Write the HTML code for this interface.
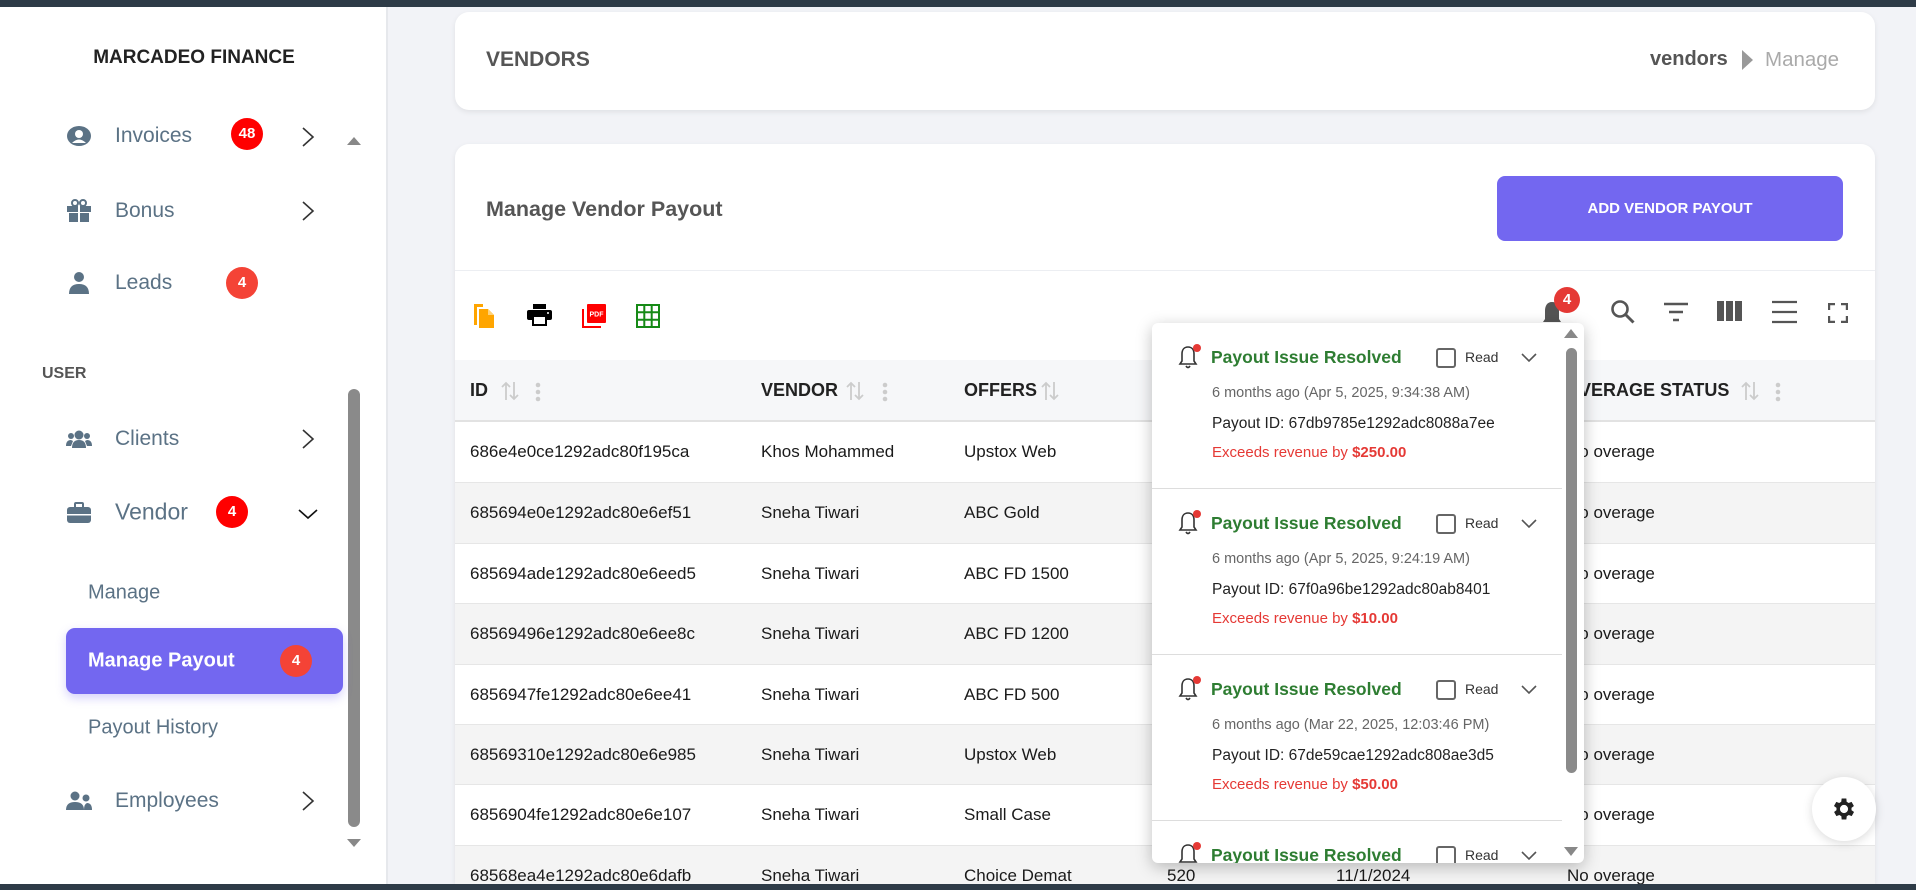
<!DOCTYPE html>
<html><head><meta charset="utf-8"><style>
*{box-sizing:border-box;margin:0;padding:0}
html,body{width:1916px;height:890px;overflow:hidden}
body{background:#f2f3f7;font-family:"Liberation Sans",sans-serif;position:relative}
.abs{position:absolute}
.topbar{left:0;top:0;width:1916px;height:7px;background:#2e3b47}
.botbar{left:0;top:884px;width:1916px;height:6px;background:#2e3b47}
.side{left:0;top:7px;width:388px;height:877px;background:#fff;border-right:2px solid #e6e8ec}
.mi{position:absolute;font-size:21px;color:#5b7285;font-weight:500;transform:translateY(-50%)}
.ico{position:absolute;transform:translate(-50%,-50%)}
.chev{position:absolute;transform:translate(-50%,-50%)}
.badge{position:absolute;transform:translate(-50%,-50%);height:32px;min-width:32px;border-radius:16px;background:#f44336;color:#fff;font-weight:bold;font-size:15px;text-align:center;line-height:32px;padding:0 6px}
.card{background:#fff;border-radius:14px;box-shadow:0 2px 6px rgba(0,0,0,.08)}
.th{position:absolute;font-weight:bold;font-size:18px;color:#222;top:380px}
.row{position:absolute;left:455px;width:1420px;height:60.4px}
.cell{position:absolute;font-size:17px;color:#1a1a1a;transform:translateY(-50%);top:30px}
.pop{left:1152px;top:323px;width:432px;height:540px;background:#fff;border-radius:6px;box-shadow:0 4px 16px rgba(0,0,0,.25);overflow:hidden}
.item{position:absolute;left:0;width:410px;height:166px;border-bottom:1px solid #ddd}
.t{position:absolute;left:59px;top:24px;font-size:17.5px;font-weight:bold;color:#2e7d32}
.ts{position:absolute;left:60px;top:62px;font-size:14.5px;color:#666}
.pid{position:absolute;left:60px;top:92px;font-size:15.5px;color:#222}
.ex{position:absolute;left:60px;top:121px;font-size:15px;color:#e53935}
.cb{position:absolute;left:284px;top:25px;width:20px;height:20px;border:2px solid #666;border-radius:3px}
.rd{position:absolute;left:313px;top:26px;font-size:14px;color:#333}
</style></head><body>
<div class="abs topbar"></div>
<div class="abs side">
 <div class="abs" style="left:0;width:388px;top:40px;text-align:center;font-weight:bold;font-size:19px;color:#222">MARCADEO FINANCE</div>
 <div class="abs" style="left:347px;top:130px;width:0;height:0;border-left:7px solid transparent;border-right:7px solid transparent;border-bottom:8px solid #888"></div>
 <div class="abs" style="left:348px;top:382px;width:12px;height:438px;background:#8a8a8a;border-radius:6px"></div>
 <div class="abs" style="left:347px;top:832px;width:0;height:0;border-left:7px solid transparent;border-right:7px solid transparent;border-top:8px solid #888"></div>
</div>
<svg class="ico" style="left:79px;top:136px" width="26" height="22" viewBox="0 0 26 22"><ellipse cx="13" cy="11" rx="12" ry="10" fill="#5b7285"/><circle cx="13" cy="9" r="4" fill="#fff"/><path d="M6 18q7-7 14 0" fill="#fff"/></svg>
<div class="mi" style="left:115px;top:136px">Invoices</div>
<div class="badge" style="left:247px;top:134px;background:#f00">48</div>
<svg class="chev" style="left:308px;top:137px" width="14" height="22"><path d="M2 2l10 9-10 9" stroke="#333" stroke-width="1.6" fill="none"/></svg>

<svg class="ico" style="left:79px;top:211px" width="26" height="24" viewBox="0 0 26 24"><rect x="1" y="7" width="24" height="6" fill="#5b7285"/><rect x="3" y="14" width="20" height="9" fill="#5b7285"/><rect x="12" y="7" width="2" height="16" fill="#fff"/><circle cx="9" cy="4" r="3" fill="none" stroke="#5b7285" stroke-width="2"/><circle cx="17" cy="4" r="3" fill="none" stroke="#5b7285" stroke-width="2"/></svg>
<div class="mi" style="left:115px;top:211px">Bonus</div>
<svg class="chev" style="left:308px;top:211px" width="14" height="22"><path d="M2 2l10 9-10 9" stroke="#333" stroke-width="1.6" fill="none"/></svg>

<svg class="ico" style="left:79px;top:283px" width="22" height="24" viewBox="0 0 22 24"><circle cx="11" cy="6" r="5" fill="#5b7285"/><path d="M1 23q0-10 10-10q10 0 10 10z" fill="#5b7285"/></svg>
<div class="mi" style="left:115px;top:283px">Leads</div>
<div class="badge" style="left:242px;top:283px">4</div>

<div class="abs" style="left:42px;top:365px;font-weight:bold;font-size:16px;color:#555">USER</div>

<svg class="ico" style="left:79px;top:439px" width="26" height="20" viewBox="0 0 26 20"><circle cx="13" cy="6" r="4.5" fill="#5b7285"/><circle cx="5" cy="7" r="3" fill="#5b7285"/><circle cx="21" cy="7" r="3" fill="#5b7285"/><path d="M6 19q0-8 7-8q7 0 7 8z" fill="#5b7285"/><path d="M0 17q0-6 5-6l2 1-2 5z M26 17q0-6-5-6l-2 1 2 5z" fill="#5b7285"/></svg>
<div class="mi" style="left:115px;top:439px">Clients</div>
<svg class="chev" style="left:308px;top:439px" width="14" height="22"><path d="M2 2l10 9-10 9" stroke="#333" stroke-width="1.6" fill="none"/></svg>

<svg class="ico" style="left:79px;top:513px" width="26" height="22" viewBox="0 0 26 22"><rect x="1" y="5" width="24" height="16" rx="3" fill="#5b7285"/><rect x="9" y="1" width="8" height="5" rx="1" fill="none" stroke="#5b7285" stroke-width="2"/><rect x="1" y="12" width="24" height="1.5" fill="#fff"/></svg>
<div class="mi" style="left:115px;top:512px;font-size:23px">Vendor</div>
<div class="badge" style="left:232px;top:512px;background:#f00">4</div>
<svg class="chev" style="left:308px;top:514px" width="22" height="12"><path d="M2 2l9 8 9-8" stroke="#111" stroke-width="1.6" fill="none"/></svg>

<div class="mi" style="left:88px;top:593px;font-size:20px">Manage</div>
<div class="abs" style="left:66px;top:628px;width:277px;height:66px;background:#7367f0;border-radius:9px;box-shadow:0 4px 10px rgba(115,103,240,.3)"></div>
<div class="mi" style="left:88px;top:661px;font-size:20px;color:#fff;font-weight:bold">Manage Payout</div>
<div class="badge" style="left:296px;top:661px">4</div>
<div class="mi" style="left:88px;top:728px;font-size:20px">Payout History</div>

<svg class="ico" style="left:79px;top:801px" width="26" height="20" viewBox="0 0 26 20"><circle cx="9" cy="5" r="4.5" fill="#5b7285"/><circle cx="20" cy="7" r="3.5" fill="#5b7285"/><path d="M0 19q0-8 9-8q9 0 9 8z" fill="#5b7285"/><path d="M18 19q0-6 3-7q5 0 5 7z" fill="#5b7285"/></svg>
<div class="mi" style="left:115px;top:801px">Employees</div>
<svg class="chev" style="left:308px;top:801px" width="14" height="22"><path d="M2 2l10 9-10 9" stroke="#333" stroke-width="1.6" fill="none"/></svg>

<div class="abs card" style="left:455px;top:12px;width:1420px;height:98px"></div>
<div class="abs" style="left:486px;top:48px;font-size:21px;font-weight:bold;color:#555">VENDORS</div>
<div class="abs" style="left:1650px;top:48px;font-size:20px;color:#555;font-weight:bold">vendors</div>
<svg class="abs" style="left:1740px;top:49px" width="16" height="22"><path d="M2 1l11 10-11 10z" fill="#999"/></svg>
<div class="abs" style="left:1765px;top:48px;font-size:20.5px;color:#aaa">Manage</div>

<div class="abs card" style="left:455px;top:144px;width:1420px;height:740px;border-radius:14px 14px 0 0"></div>
<div class="abs" style="left:486px;top:197px;font-size:21.5px;font-weight:bold;color:#555">Manage Vendor Payout</div>
<div class="abs" style="left:1497px;top:176px;width:346px;height:65px;background:#7367f0;border-radius:8px;color:#fff;font-weight:bold;font-size:15px;text-align:center;line-height:65px">ADD VENDOR PAYOUT</div>
<div class="abs" style="left:455px;top:270px;width:1420px;height:1px;background:#eceef2"></div>

<svg class="abs" style="left:473px;top:303px" width="24" height="26" viewBox="0 0 24 26"><path d="M1 1h9v3H4v18H1z" fill="#ffa500"/><path d="M6 6h9l6 6v13H6z" fill="#ffa500"/><path d="M15 6v6h6" fill="#ffd27a"/></svg>
<svg class="abs" style="left:527px;top:304px" width="25" height="22" viewBox="0 0 25 22"><rect x="6" y="0" width="13" height="5" fill="#000"/><rect x="0" y="6" width="25" height="10" rx="2" fill="#000"/><rect x="6" y="12" width="13" height="9" fill="#fff" stroke="#000" stroke-width="2"/><circle cx="21" cy="9" r="1" fill="#fff"/></svg>
<svg class="abs" style="left:582px;top:304px" width="24" height="24" viewBox="0 0 24 24"><path d="M0 5v19h19v-2H2V5z" fill="#f00"/><rect x="5" y="0" width="19" height="19" rx="1" fill="#f00"/><text x="14.5" y="12.5" font-family="Liberation Sans" font-size="7" font-weight="bold" fill="#fff" text-anchor="middle">PDF</text></svg>
<svg class="abs" style="left:636px;top:304px" width="24" height="24" viewBox="0 0 24 24"><rect x="1" y="1" width="22" height="22" fill="none" stroke="#168a16" stroke-width="2"/><path d="M8.3 1v22M15.7 1v22M1 8.3h22M1 15.7h22" stroke="#168a16" stroke-width="2"/></svg>

<svg class="abs" style="left:1541px;top:300px" width="22" height="26" viewBox="0 0 22 26"><path d="M11 2c-5 0-7 4-7 9v8l-2 3h18l-2-3v-8c0-5-2-9-7-9z" fill="#555"/></svg>
<div class="abs" style="left:1554px;top:287px;width:26px;height:26px;border-radius:13px;background:#e53935;color:#fff;font-size:15px;font-weight:bold;text-align:center;line-height:26px">4</div>
<svg class="abs" style="left:1610px;top:299px" width="26" height="26" viewBox="0 0 26 26"><circle cx="10" cy="10" r="7.5" fill="none" stroke="#555" stroke-width="2.6"/><path d="M15.5 15.5l8 8" stroke="#555" stroke-width="3"/></svg>
<svg class="abs" style="left:1664px;top:302px" width="24" height="20"><path d="M0 2h24M5 10h14M9 18h6" stroke="#555" stroke-width="2.4"/></svg>
<svg class="abs" style="left:1717px;top:301px" width="25" height="20"><path d="M0 0h7v20H0zM9 0h7v20H9zM18 0h7v20h-7z" fill="#555"/></svg>
<svg class="abs" style="left:1772px;top:300px" width="25" height="24"><path d="M0 2h25M0 12h25M0 22h25" stroke="#555" stroke-width="2.2"/></svg>
<svg class="abs" style="left:1828px;top:303px" width="20" height="20"><path d="M1 7V1h6M13 1h6v6M19 13v6h-6M7 19H1v-6" stroke="#555" stroke-width="2.4" fill="none"/></svg>

<div class="abs" style="left:455px;top:360px;width:1420px;height:62px;background:#f6f7f9;border-bottom:2px solid #e2e2e2"></div>
<div class="th" style="left:470px">ID</div>
<div class="th" style="left:761px">VENDOR</div>
<div class="th" style="left:964px">OFFERS</div>
<div class="th" style="left:1565px">OVERAGE STATUS</div>
<svg class="abs" style="left:500px;top:380px" width="20" height="22"><path d="M6 20V3M2 7l4-4 4 4M14 2v17M10 15l4 4 4-4" stroke="#ccc" stroke-width="1.8" fill="none"/></svg>
<svg class="abs" style="left:535px;top:382px" width="6" height="20"><circle cx="3" cy="3" r="2.3" fill="#ccc"/><circle cx="3" cy="10" r="2.3" fill="#ccc"/><circle cx="3" cy="17" r="2.3" fill="#ccc"/></svg>
<svg class="abs" style="left:845px;top:380px" width="20" height="22"><path d="M6 20V3M2 7l4-4 4 4M14 2v17M10 15l4 4 4-4" stroke="#ccc" stroke-width="1.8" fill="none"/></svg>
<svg class="abs" style="left:882px;top:382px" width="6" height="20"><circle cx="3" cy="3" r="2.3" fill="#ccc"/><circle cx="3" cy="10" r="2.3" fill="#ccc"/><circle cx="3" cy="17" r="2.3" fill="#ccc"/></svg>
<svg class="abs" style="left:1040px;top:380px" width="20" height="22"><path d="M6 20V3M2 7l4-4 4 4M14 2v17M10 15l4 4 4-4" stroke="#ccc" stroke-width="1.8" fill="none"/></svg>
<svg class="abs" style="left:1740px;top:380px" width="20" height="22"><path d="M6 20V3M2 7l4-4 4 4M14 2v17M10 15l4 4 4-4" stroke="#ccc" stroke-width="1.8" fill="none"/></svg>
<svg class="abs" style="left:1775px;top:382px" width="6" height="20"><circle cx="3" cy="3" r="2.3" fill="#ccc"/><circle cx="3" cy="10" r="2.3" fill="#ccc"/><circle cx="3" cy="17" r="2.3" fill="#ccc"/></svg>

<div class="row" style="top:422px;background:#fff"><div class="cell" style="left:15px">686e4e0ce1292adc80f195ca</div><div class="cell" style="left:306px">Khos Mohammed</div><div class="cell" style="left:509px">Upstox Web</div><div class="cell" style="left:1112px">No overage</div></div>
<div class="row" style="top:482.4px;background:#f4f4f4;border-top:1px solid #e6e6e6"><div class="cell" style="left:15px">685694e0e1292adc80e6ef51</div><div class="cell" style="left:306px">Sneha Tiwari</div><div class="cell" style="left:509px">ABC Gold</div><div class="cell" style="left:1112px">No overage</div></div>
<div class="row" style="top:542.8px;background:#fff;border-top:1px solid #e6e6e6"><div class="cell" style="left:15px">685694ade1292adc80e6eed5</div><div class="cell" style="left:306px">Sneha Tiwari</div><div class="cell" style="left:509px">ABC FD 1500</div><div class="cell" style="left:1112px">No overage</div></div>
<div class="row" style="top:603.2px;background:#f4f4f4;border-top:1px solid #e6e6e6"><div class="cell" style="left:15px">68569496e1292adc80e6ee8c</div><div class="cell" style="left:306px">Sneha Tiwari</div><div class="cell" style="left:509px">ABC FD 1200</div><div class="cell" style="left:1112px">No overage</div></div>
<div class="row" style="top:663.6px;background:#fff;border-top:1px solid #e6e6e6"><div class="cell" style="left:15px">6856947fe1292adc80e6ee41</div><div class="cell" style="left:306px">Sneha Tiwari</div><div class="cell" style="left:509px">ABC FD 500</div><div class="cell" style="left:1112px">No overage</div></div>
<div class="row" style="top:724px;background:#f4f4f4;border-top:1px solid #e6e6e6"><div class="cell" style="left:15px">68569310e1292adc80e6e985</div><div class="cell" style="left:306px">Sneha Tiwari</div><div class="cell" style="left:509px">Upstox Web</div><div class="cell" style="left:1112px">No overage</div></div>
<div class="row" style="top:784.4px;background:#fff;border-top:1px solid #e6e6e6"><div class="cell" style="left:15px">6856904fe1292adc80e6e107</div><div class="cell" style="left:306px">Sneha Tiwari</div><div class="cell" style="left:509px">Small Case</div><div class="cell" style="left:1112px">No overage</div></div>
<div class="row" style="top:844.8px;height:39.2px;overflow:hidden;background:#f4f4f4;border-top:1px solid #e6e6e6"><div class="cell" style="left:15px">68568ea4e1292adc80e6dafb</div><div class="cell" style="left:306px">Sneha Tiwari</div><div class="cell" style="left:509px">Choice Demat</div><div class="cell" style="left:712px">520</div><div class="cell" style="left:881px">11/1/2024</div><div class="cell" style="left:1112px">No overage</div></div>

<div class="abs" style="left:1812px;top:777px;width:64px;height:64px;border-radius:32px;background:#fff;box-shadow:0 2px 10px rgba(0,0,0,.15)"></div>
<svg class="abs" style="left:1830px;top:795px" width="28" height="28" viewBox="0 0 24 24"><path fill="#222" d="M19.4 13a7.5 7.5 0 000-2l2.1-1.6-2-3.5-2.5 1a7.6 7.6 0 00-1.7-1L15 3h-4l-.4 2.9a7.6 7.6 0 00-1.7 1l-2.5-1-2 3.5L6.6 11a7.5 7.5 0 000 2l-2.1 1.6 2 3.5 2.5-1a7.6 7.6 0 001.7 1L11 21h4l.4-2.9a7.6 7.6 0 001.7-1l2.5 1 2-3.5zM13 15.5a3.5 3.5 0 110-7 3.5 3.5 0 010 7z" transform="translate(-1 0)"/></svg>

<div class="abs pop">
 <div class="item" style="top:0">
  <svg class="abs" style="left:26px;top:20px" width="26" height="28" viewBox="0 0 26 28"><path d="M10 4c-4 0-6 3-6 7v7l-2 3h16l-2-3v-7c0-4-2-7-6-7z" fill="none" stroke="#333" stroke-width="1.6"/><path d="M8 23q2 3 4 0" stroke="#333" stroke-width="1.6" fill="none"/><circle cx="19" cy="5" r="4" fill="#e53935"/></svg>
  <div class="t">Payout Issue Resolved</div><div class="cb"></div><div class="rd">Read</div>
  <svg class="abs" style="left:369px;top:30px" width="16" height="10"><path d="M1 1l7 7 7-7" stroke="#555" stroke-width="1.6" fill="none"/></svg>
  <div class="ts">6 months ago (Apr 5, 2025, 9:34:38 AM)</div>
  <div class="pid">Payout ID: 67db9785e1292adc8088a7ee</div>
  <div class="ex">Exceeds revenue by <b>$250.00</b></div>
 </div>
 <div class="item" style="top:166px">
  <svg class="abs" style="left:26px;top:20px" width="26" height="28" viewBox="0 0 26 28"><path d="M10 4c-4 0-6 3-6 7v7l-2 3h16l-2-3v-7c0-4-2-7-6-7z" fill="none" stroke="#333" stroke-width="1.6"/><path d="M8 23q2 3 4 0" stroke="#333" stroke-width="1.6" fill="none"/><circle cx="19" cy="5" r="4" fill="#e53935"/></svg>
  <div class="t">Payout Issue Resolved</div><div class="cb"></div><div class="rd">Read</div>
  <svg class="abs" style="left:369px;top:30px" width="16" height="10"><path d="M1 1l7 7 7-7" stroke="#555" stroke-width="1.6" fill="none"/></svg>
  <div class="ts">6 months ago (Apr 5, 2025, 9:24:19 AM)</div>
  <div class="pid">Payout ID: 67f0a96be1292adc80ab8401</div>
  <div class="ex">Exceeds revenue by <b>$10.00</b></div>
 </div>
 <div class="item" style="top:332px">
  <svg class="abs" style="left:26px;top:20px" width="26" height="28" viewBox="0 0 26 28"><path d="M10 4c-4 0-6 3-6 7v7l-2 3h16l-2-3v-7c0-4-2-7-6-7z" fill="none" stroke="#333" stroke-width="1.6"/><path d="M8 23q2 3 4 0" stroke="#333" stroke-width="1.6" fill="none"/><circle cx="19" cy="5" r="4" fill="#e53935"/></svg>
  <div class="t">Payout Issue Resolved</div><div class="cb"></div><div class="rd">Read</div>
  <svg class="abs" style="left:369px;top:30px" width="16" height="10"><path d="M1 1l7 7 7-7" stroke="#555" stroke-width="1.6" fill="none"/></svg>
  <div class="ts">6 months ago (Mar 22, 2025, 12:03:46 PM)</div>
  <div class="pid">Payout ID: 67de59cae1292adc808ae3d5</div>
  <div class="ex">Exceeds revenue by <b>$50.00</b></div>
 </div>
 <div class="item" style="top:498px;border:none">
  <svg class="abs" style="left:26px;top:20px" width="26" height="28" viewBox="0 0 26 28"><path d="M10 4c-4 0-6 3-6 7v7l-2 3h16l-2-3v-7c0-4-2-7-6-7z" fill="none" stroke="#333" stroke-width="1.6"/><path d="M8 23q2 3 4 0" stroke="#333" stroke-width="1.6" fill="none"/><circle cx="19" cy="5" r="4" fill="#e53935"/></svg>
  <div class="t">Payout Issue Resolved</div><div class="cb"></div><div class="rd">Read</div>
  <svg class="abs" style="left:369px;top:30px" width="16" height="10"><path d="M1 1l7 7 7-7" stroke="#555" stroke-width="1.6" fill="none"/></svg>
 </div>
 <div class="abs" style="left:412px;top:6px;width:0;height:0;border-left:7px solid transparent;border-right:7px solid transparent;border-bottom:9px solid #888"></div>
 <div class="abs" style="left:414px;top:25px;width:11px;height:425px;border-radius:6px;background:#8a8a8a"></div>
 <div class="abs" style="left:412px;top:524px;width:0;height:0;border-left:7px solid transparent;border-right:7px solid transparent;border-top:9px solid #888"></div>
</div>
<div class="abs botbar"></div>
</body></html>
